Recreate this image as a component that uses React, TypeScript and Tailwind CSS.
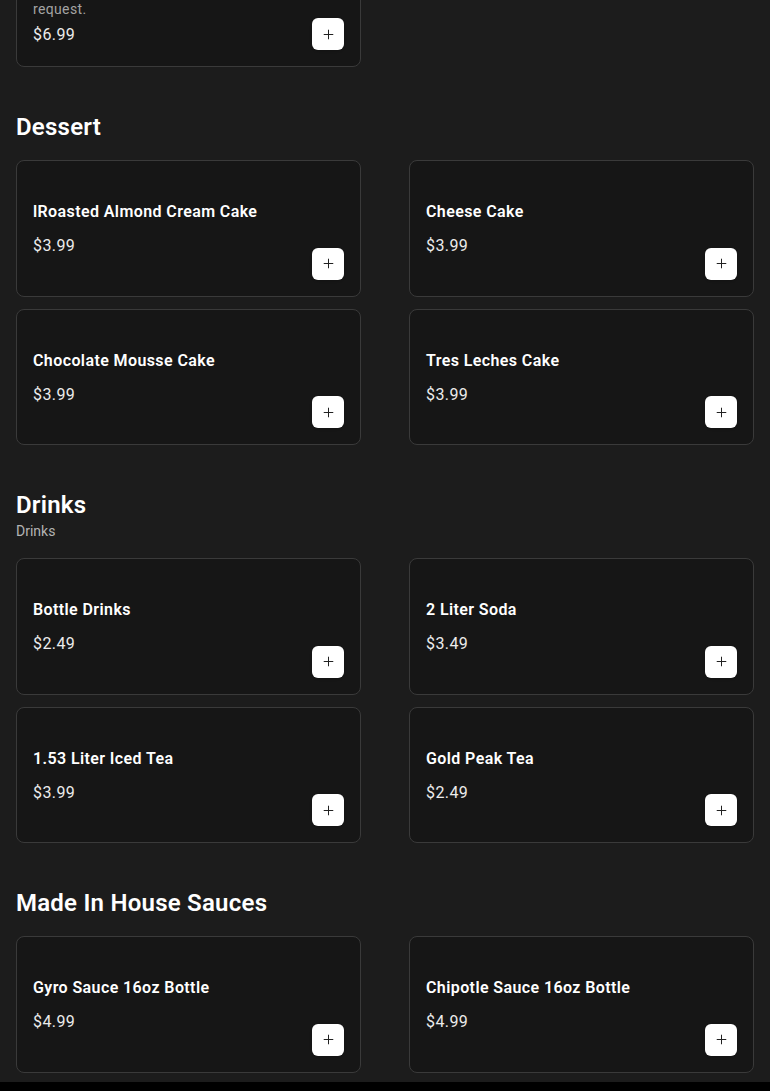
import { Plus } from 'lucide-react';
import type { ReactNode } from 'react';

type Item = { name: string; price: string; description?: ReactNode };

type Section = { title: string; subtitle?: string; items: Item[] };

const sections: Section[] = [
  {
    title: 'Dessert',
    items: [
      { name: 'lRoasted Almond Cream Cake', price: '$3.99' },
      { name: 'Cheese Cake', price: '$3.99' },
      { name: 'Chocolate Mousse Cake', price: '$3.99' },
      { name: 'Tres Leches Cake', price: '$3.99' },
    ],
  },
  {
    title: 'Drinks',
    subtitle: 'Drinks',
    items: [
      { name: 'Bottle Drinks', price: '$2.49' },
      { name: '2 Liter Soda', price: '$3.49' },
      { name: '1.53 Liter Iced Tea', price: '$3.99' },
      { name: 'Gold Peak Tea', price: '$2.49' },
    ],
  },
  {
    title: 'Made In House Sauces',
    items: [
      { name: 'Gyro Sauce 16oz Bottle', price: '$4.99' },
      { name: 'Chipotle Sauce 16oz Bottle', price: '$4.99' },
    ],
  },
];

const MenuCard = ({ item }: { item: Item }) => (
  <div className="flex min-h-[136.5px] items-stretch justify-between gap-3 rounded-lg border border-[#3a3a3a] bg-[#161616] p-4">
    <div className={`flex min-w-0 flex-col justify-center ${item.description ? 'pb-[3px]' : 'pt-[2px]'}`}>
      <h3 className="text-base leading-6 font-semibold tracking-wide text-white">{item.name}</h3>
      {item.description && (
        <p className="mt-1 text-sm leading-5 tracking-wide text-[#a3a3a3]">{item.description}</p>
      )}
      <p className={`${item.description ? 'mt-1' : 'mt-2.5'} text-base leading-6 tracking-wide text-[#ececec]`}>
        {item.price}
      </p>
    </div>
    <button className="flex h-8 w-8 shrink-0 items-center justify-center self-end rounded-md bg-white text-[#222] shadow-sm">
      <Plus size={15} strokeWidth={1.6} />
    </button>
  </div>
);

export default function App() {
  return (
    <div className="min-h-screen overflow-hidden bg-[#1c1c1c] font-['Roboto',sans-serif]">
      <div className="px-4">
        {/* tail of the previous category */}
        <div className="-mt-[86px] grid grid-cols-2 gap-x-12 gap-y-3">
          <MenuCard
            item={{
              name: 'Loaded Fries',
              description: (
                <>
                  Fries topped with gyro meat, feta and
                  <br />
                  tzatziki, extra sauce available upon
                  <br />
                  request.
                </>
              ),
              price: '$6.99',
            }}
          />
        </div>

        {sections.map((s) => (
          <section key={s.title} className="mt-11">
            <h2 className="text-2xl leading-8 font-semibold tracking-[0.01em] text-white">{s.title}</h2>
            <p className={`${s.subtitle ? '' : 'mt-0.5'} text-sm leading-5 text-[#b3b3b3]`}>{s.subtitle}</p>
            <div className="mt-[17px] grid grid-cols-2 gap-x-12 gap-y-3">
              {s.items.map((it) => (
                <MenuCard key={it.name} item={it} />
              ))}
            </div>
          </section>
        ))}
      </div>
      <div className="mt-[9px] h-40 bg-black" />
    </div>
  );
}
